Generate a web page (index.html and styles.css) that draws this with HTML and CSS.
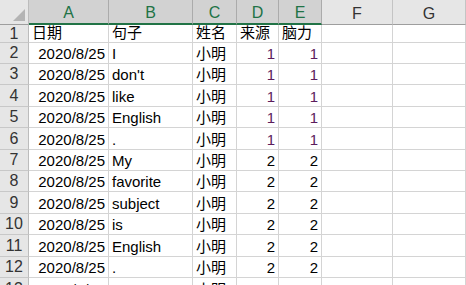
FILE: index.html
```html
<!DOCTYPE html>
<html>
<head>
    <meta charset="UTF-8">
    <title>Sheet1</title>
    <link rel="stylesheet" href="styles.css">
</head>
<body>
    <div class="sheet">
        <!-- en-tetes de colonnes -->
        <div class="corner"><span class="corner-mark"></span></div>
        <div class="col-head selected">A</div>
        <div class="col-head selected">B</div>
        <div class="col-head selected">C</div>
        <div class="col-head selected">D</div>
        <div class="col-head selected">E</div>
        <div class="col-head">F</div>
        <div class="col-head">G</div>

        <div class="row-head">1</div>
        <div class="cell">日期</div>
        <div class="cell">句子</div>
        <div class="cell">姓名</div>
        <div class="cell">来源</div>
        <div class="cell">脑力</div>
        <div class="cell"></div>
        <div class="cell"></div>

        <div class="row-head">2</div>
        <div class="cell num">2020/8/25</div>
        <div class="cell">I</div>
        <div class="cell">小明</div>
        <div class="cell num purple">1</div>
        <div class="cell num purple">1</div>
        <div class="cell"></div>
        <div class="cell"></div>

        <div class="row-head">3</div>
        <div class="cell num">2020/8/25</div>
        <div class="cell">don't</div>
        <div class="cell">小明</div>
        <div class="cell num purple">1</div>
        <div class="cell num purple">1</div>
        <div class="cell"></div>
        <div class="cell"></div>

        <div class="row-head">4</div>
        <div class="cell num">2020/8/25</div>
        <div class="cell">like</div>
        <div class="cell">小明</div>
        <div class="cell num purple">1</div>
        <div class="cell num purple">1</div>
        <div class="cell"></div>
        <div class="cell"></div>

        <div class="row-head">5</div>
        <div class="cell num">2020/8/25</div>
        <div class="cell">English</div>
        <div class="cell">小明</div>
        <div class="cell num purple">1</div>
        <div class="cell num purple">1</div>
        <div class="cell"></div>
        <div class="cell"></div>

        <div class="row-head">6</div>
        <div class="cell num">2020/8/25</div>
        <div class="cell">.</div>
        <div class="cell">小明</div>
        <div class="cell num purple">1</div>
        <div class="cell num purple">1</div>
        <div class="cell"></div>
        <div class="cell"></div>

        <div class="row-head">7</div>
        <div class="cell num">2020/8/25</div>
        <div class="cell">My</div>
        <div class="cell">小明</div>
        <div class="cell num">2</div>
        <div class="cell num">2</div>
        <div class="cell"></div>
        <div class="cell"></div>

        <div class="row-head">8</div>
        <div class="cell num">2020/8/25</div>
        <div class="cell">favorite</div>
        <div class="cell">小明</div>
        <div class="cell num">2</div>
        <div class="cell num">2</div>
        <div class="cell"></div>
        <div class="cell"></div>

        <div class="row-head">9</div>
        <div class="cell num">2020/8/25</div>
        <div class="cell">subject</div>
        <div class="cell">小明</div>
        <div class="cell num">2</div>
        <div class="cell num">2</div>
        <div class="cell"></div>
        <div class="cell"></div>

        <div class="row-head">10</div>
        <div class="cell num">2020/8/25</div>
        <div class="cell">is</div>
        <div class="cell">小明</div>
        <div class="cell num">2</div>
        <div class="cell num">2</div>
        <div class="cell"></div>
        <div class="cell"></div>

        <div class="row-head">11</div>
        <div class="cell num">2020/8/25</div>
        <div class="cell">English</div>
        <div class="cell">小明</div>
        <div class="cell num">2</div>
        <div class="cell num">2</div>
        <div class="cell"></div>
        <div class="cell"></div>

        <div class="row-head">12</div>
        <div class="cell num">2020/8/25</div>
        <div class="cell">.</div>
        <div class="cell">小明</div>
        <div class="cell num">2</div>
        <div class="cell num">2</div>
        <div class="cell"></div>
        <div class="cell"></div>

        <div class="row-head">13</div>
        <div class="cell num">2020/8/26</div>
        <div class="cell">Tu</div>
        <div class="cell">小明</div>
        <div class="cell num">2</div>
        <div class="cell num">2</div>
        <div class="cell"></div>
        <div class="cell"></div>
    </div>
</body>
</html>
```

FILE: styles.css
```css
* {
    margin: 0;
    padding: 0;
    box-sizing: border-box;
}

body {
    font-family: 'Liberation Sans', 'Noto Sans CJK SC', sans-serif;
    font-size: 15px;
    background: white;
    color: #000;
    overflow: hidden;
}

.sheet {
    display: grid;
    grid-template-columns: 29px 80px 84px 44px 42px 43px 71px 73px;
    grid-template-rows: 25px 18px 21px 21px 22px 21px 22px 21px 21px 22px 21px 22px 21px 22px;
    width: 466px;
}

.corner {
    position: relative;
    background: #e6e6e6;
    border-right: 1px solid #bcbcbc;
    border-bottom: 1px solid #9e9e9e;
}

.corner-mark {
    position: absolute;
    right: 3px;
    bottom: 3px;
    width: 0;
    height: 0;
    border-left: 12px solid transparent;
    border-bottom: 12px solid #b4b4b4;
}

.col-head {
    display: flex;
    align-items: center;
    justify-content: center;
    padding-top: 4px;
    font-size: 16px;
    line-height: 18px;
    background: #e6e6e6;
    color: #333;
    border-right: 1px solid #c4c4c4;
    border-bottom: 1px solid #9e9e9e;
}

.col-head.selected {
    background: #d2d2d2;
    color: #217346;
    border-right-color: #ababab;
    border-bottom: 2px solid #217346;
    padding-top: 3px;
}

.row-head {
    display: flex;
    align-items: center;
    justify-content: center;
    font-size: 16px;
    line-height: 18px;
    background: #e6e6e6;
    color: #333;
    border-right: 1px solid #bcbcbc;
    border-bottom: 1px solid #c8c8c8;
}

.cell {
    display: flex;
    align-items: flex-end;
    padding: 0 2px 1px 3px;
    line-height: 17px;
    white-space: nowrap;
    overflow: hidden;
    border-right: 1px solid #d4d4d4;
    border-bottom: 1px solid #d4d4d4;
}

.num {
    justify-content: flex-end;
    padding-right: 3px;
}

.purple {
    color: #5c1c5c;
}
```
